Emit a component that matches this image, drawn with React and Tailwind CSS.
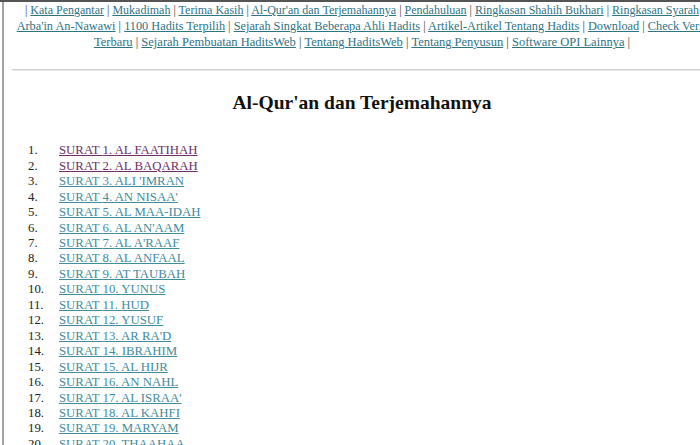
const serif = { fontFamily: "'Liberation Serif', 'Times New Roman', serif" };

const line1 = ['Kata Pengantar', 'Mukadimah', 'Terima Kasih', "Al-Qur'an dan Terjemahannya", 'Pendahuluan', 'Ringkasan Shahih Bukhari', 'Ringkasan Syarah'];
const line2 = ["Arba'in An-Nawawi", '1100 Hadits Terpilih', 'Sejarah Singkat Beberapa Ahli Hadits', 'Artikel-Artikel Tentang Hadits', 'Download', 'Check Versi'];
const line3 = ['Terbaru', 'Sejarah Pembuatan HaditsWeb', 'Tentang HaditsWeb', 'Tentang Penyusun', 'Software OPI Lainnya'];

const surat = [
  'AL FAATIHAH', 'AL BAQARAH', "ALI 'IMRAN", "AN NISAA'", 'AL MAA-IDAH', "AL AN'AAM", "AL A'RAAF",
  'AL ANFAAL', 'AT TAUBAH', 'YUNUS', 'HUD', 'YUSUF', "AR RA'D", 'IBRAHIM', 'AL HIJR', 'AN NAHL',
  "AL ISRAA'", 'AL KAHFI', 'MARYAM', 'THAAHAA', "AL ANBIYAA'", 'AL HAJJ',
];

function NavLine({ items, lead, trail, className }) {
  return (
    <div className={'whitespace-nowrap ' + className}>
      {lead && <span className="text-[#444]">| </span>}
      {items.map((t, i) => (
        <span key={t}>
          <a href="#" className="text-[#2f7384] underline decoration-1">{t}</a>
          {(i < items.length - 1 || trail) && <span className="text-[#444]"> | </span>}
        </span>
      ))}
    </div>
  );
}

export default function App() {
  return (
    <div className="w-[700px] h-[445px] overflow-hidden bg-white border-t-2 border-[#555]" style={serif}>
      <div className="ml-[2px] h-full border-l-2 border-[#a3a3a3] pl-2">
        <div className="w-[700px]">

          {/* NAV */}
          <div className="text-center leading-[16px]">
            <NavLine items={line1} lead className="text-[12px]" />
            <NavLine items={line2} className="text-[12.3px]" />
            <NavLine items={line3} trail className="text-[12.5px]" />
          </div>

          <div className="mt-[19px] h-[2px] bg-[#cfcfcf] border-b border-[#e8e8e8]" />

          {/* TITLE */}
          <h3 className="text-center text-[19.5px] font-bold text-[#111] mt-[17px]">Al-Qur'an dan Terjemahannya</h3>

          {/* LIST */}
          <div className="mt-[26px] pl-4 text-[12.8px] leading-[15.45px]">
            {surat.map((s, i) => (
              <div key={s} className="flex">
                <span className="w-[31px] text-[#222]">{i + 1}.</span>
                <a href="#" className={i < 2 ? 'text-[#6e2f68] underline' : 'text-[#3f8c9b] underline'}>
                  SURAT {i + 1}. {s}
                </a>
              </div>
            ))}
          </div>
        </div>
      </div>
    </div>
  );
}
